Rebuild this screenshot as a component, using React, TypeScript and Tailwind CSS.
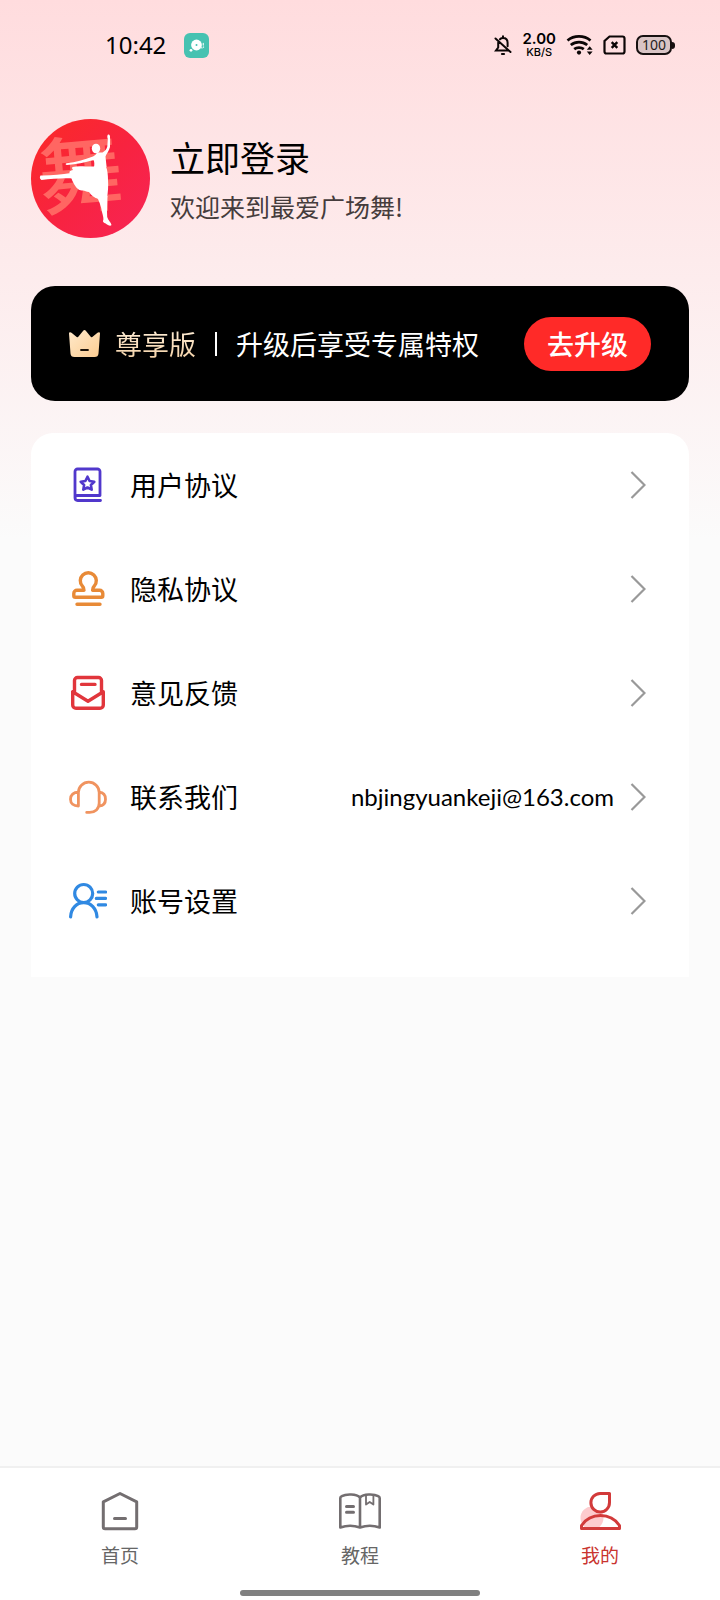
import type { ReactNode } from "react";

const FONT = "font-['Noto_Sans_CJK_SC','Noto_Sans',sans-serif]";

function StatusBar() {
  return (
    <div className="flex h-[90px] items-center justify-between pl-[105px] pr-[45px] text-black">
      <div className="flex items-center gap-[18px]">
        <span className="font-['Noto_Sans',sans-serif] text-2xl">10:42</span>
        <svg viewBox="0 0 25 25" className="size-[25px]" aria-hidden="true">
          <rect width="25" height="25" rx="6" fill="#46c2b1" />
          <circle cx="12.5" cy="12" r="5.4" fill="#fff" />
          <circle cx="12.5" cy="12" r="1" fill="#46c2b1" />
          <circle cx="7" cy="17.3" r="1.4" fill="#fff" />
          <path d="M19.300 10.500v1.500M19.500 13.800v.5M17 14.500l1 .5" stroke="#dff5f1" strokeWidth="1.3" strokeLinecap="round" />
        </svg>
      </div>

      <div className="flex items-center gap-[10px]">
        {/* Muted bell */}
        <svg viewBox="0 0 18 22" className="h-[22px] w-[18px]" fill="none" stroke="#0c0606" strokeWidth="2" strokeLinecap="round" aria-hidden="true">
          <path d="M6 5.200C6.800 4.400 7.800 4 9 4c2.800 0 4.600 2 4.600 4.800v3.400M4.200 8.500v5L2 16.400h12.500M9 2.300v1.200M1.500 4.500l15 13.500" />
          <path d="M8 20h2" strokeWidth="2.200" />
        </svg>
        <div className="flex flex-col items-center font-['Inter',sans-serif]">
          <span className="text-[15px] font-semibold leading-[15px]">2.00</span>
          <span className="text-[11px] font-medium leading-[13px]">KB/S</span>
        </div>
        {/* Wifi */}
        <svg viewBox="0 0 27 22" className="h-[22px] w-[27px]" fill="none" stroke="#0c0606" strokeWidth="2.800" aria-hidden="true">
          <path d="M1.500 6.500c6.500-5.400 16.500-5.400 23 0M4.800 11c4.800-3.900 11.600-3.900 16.400 0M8.200 15.200c2.700-2.200 6.900-2.200 9.600 0" />
          <circle cx="13" cy="18.600" r="2.100" fill="#0c0606" stroke="none" />
          <path d="M20.800 15.800l2.900-3.600 2.900 3.600zM20.800 17.400l2.900 3.600 2.900-3.600z" fill="#0c0606" stroke="none" />
        </svg>
        {/* Missing SIM */}
        <svg viewBox="0 0 23 20" className="h-5 w-[23px]" fill="none" stroke="#0c0606" strokeWidth="2.200" aria-hidden="true">
          <path d="M6.500 1.500h13a2 2 0 0 1 2 2v13a2 2 0 0 1-2 2h-16a2 2 0 0 1-2-2V6z" />
          <path d="M8.700 7.200l5.600 5.600M14.300 7.200l-5.600 5.600" strokeWidth="2.400" />
        </svg>
        <div className="flex items-center">
          <span className="flex h-5 w-9 items-center justify-center rounded-[7px] border-2 border-[#171010] bg-[#d9c4c5] font-['Noto_Sans',sans-serif] text-sm leading-none text-[#241c1c]">
            100
          </span>
          <span className="h-[7px] w-[3px] rounded-r-sm bg-[#171010]" />
        </div>
      </div>
    </div>
  );
}

function Avatar() {
  return (
    <svg viewBox="0 0 120 120" className="size-[120px] shrink-0" role="img" aria-label="最爱广场舞">
      <defs>
        <linearGradient id="avatarBg" x1="0" y1="0" x2="1" y2="1">
          <stop offset="0" stopColor="#fb2a26" />
          <stop offset="0.5" stopColor="#f8233f" />
          <stop offset="1" stopColor="#f72456" />
        </linearGradient>
      </defs>
      <circle cx="59.500" cy="59.500" r="59.500" fill="url(#avatarBg)" />
      <text
        x="8"
        y="87"
        fontSize="84"
        fontWeight="500"
        fill="#ff6662"
        fontFamily="'Noto Sans CJK SC', sans-serif"
        transform="rotate(-5 50 60)"
        aria-hidden="true"
      >
        舞
      </text>
      <g fill="#fff">
        <ellipse cx="65" cy="29.500" rx="4.200" ry="4.800" />
        {/* Raised arm, torso and the other arm */}
        <path d="M77 15.500C78.500 15 79.300 16.500 79 18.500L79 28C78 32 75.500 34.500 74.500 37.500L75.500 48H63C63.500 45.500 63.500 43 62.500 41C54 43.500 45 45.500 36 46C34.500 46 34 44.500 35.500 44.200C45 43.500 53 40.500 62 37.500C64.500 36 65 35.500 66 33.500L71.500 33.500C74 32 75.800 30 76.300 27.500L76.800 20C76 18 76.300 16 77 15.500Z" />
        {/* Skirt */}
        <path d="M63 47.500C57 48 48 46.500 41.500 48C40.500 49.500 41.500 50 42 51C39 51.500 38 52.500 38.500 54C40 57 40.500 61 42.500 64C44.500 68 47.500 71.500 51 71.500C53.500 71 55 73 58 73C60 76 63 79 68 80L76 79C77 73 77.500 67 77 61C77 56 76.500 51 75 47.500Z" />
        {/* Extended and standing legs */}
        <path d="M40 54C30 55.500 20 56.700 9.500 56.500C8.500 58 8.500 60 10.500 61C21 60 31 58.800 42 59.500Z" />
        <path d="M65 77C68 81 70 87 71 93C72 97 73 100 72 102C72 104 74.500 104 76 105.500C77.500 106.800 80 107 80.500 106C80 103.500 77 101 76.200 98C75.700 91 76.500 84 76.500 77Z" />
      </g>
    </svg>
  );
}

function Crown() {
  return (
    <svg viewBox="0 0 31 27" className="h-[27px] w-[31px] shrink-0" aria-hidden="true">
      <defs>
        <linearGradient id="crownFill" x1="0" y1="0" x2="1" y2="1">
          <stop offset="0" stopColor="#ffe9cb" />
          <stop offset="1" stopColor="#fccd92" />
        </linearGradient>
      </defs>
      <path
        d="M0 3.600C0 2 1.500 1.700 2.500 2.800l5.200 4.200c.8.600 1.300.3 1.800-.4L14 1c.9-1.300 2.100-1.300 3 0l4.500 5.600c.5.700 1 1 1.800.4l5.200-4.200C29.500 1.700 31 2 31 3.600l-1.500 19.900C29.300 26 28 27 25.500 27h-20c-2.500 0-3.800-1-4-3.500z"
        fill="url(#crownFill)"
      />
      <path d="M12 20h7" stroke="#1c1208" strokeWidth="1.800" strokeLinecap="round" />
    </svg>
  );
}

type MenuItem = { label: string; color: string; icon: ReactNode; value?: string };

const menu: MenuItem[] = [
  {
    label: "用户协议",
    color: "#5138cc",
    icon: (
      <>
        <path d="M31.500 34.500H8.700A2.700 2.700 0 0 1 6 31.800V5.500A2.500 2.500 0 0 1 8.500 3h20A2.500 2.500 0 0 1 31 5.500v24H8.500c-1.500 0-2.500.8-2.500 2" strokeWidth="2.800" />
        <path d="M18.500 10.700l2.100 4.300 4.700.7-3.400 3.300.8 4.700-4.200-2.200-4.200 2.200.8-4.700-3.400-3.300 4.700-.7z" strokeWidth="2.600" />
      </>
    ),
  },
  {
    label: "隐私协议",
    color: "#e88a37",
    icon: (
      <path
        d="M15 20.200c.3-2-.5-3-1.700-4.200A8 8 0 1 1 25.300 16c-1.200 1.200-2 2.200-1.700 4.200h7a3.200 3.200 0 0 1 3.200 3.200v2.400a1.500 1.500 0 0 1-1.500 1.500h-26a1.500 1.500 0 0 1-1.500-1.500v-2.400A3.200 3.200 0 0 1 8 20.200zM8 34.300h23"
        strokeWidth="3.400"
      />
    ),
  },
  {
    label: "意见反馈",
    color: "#e1363c",
    icon: (
      <path
        d="M5.500 18V6.500A3 3 0 0 1 8.500 3.500h21a3 3 0 0 1 3 3v11.500M3.700 17.700V31a3.300 3.300 0 0 0 3.300 3.300h24a3.300 3.300 0 0 0 3.300-3.300V17.700L19 27.200zM12.500 10.400h13.500"
        strokeWidth="3.400"
      />
    ),
  },
  {
    label: "联系我们",
    color: "#f0935f",
    value: "nbjingyuankeji@163.com",
    icon: (
      <path
        d="M9.400 28V14.500a10.400 10.400 0 0 1 20.800 0V25c0 6-4.200 9.400-9.500 9.400h-3M9.400 14.200C4.500 14.200 1.500 17 1.500 21.200S4.500 28 9.400 28M30.200 14.200c3.700.4 6.300 3 6.300 7s-2.600 6.500-6.300 6.800"
        strokeWidth="2.800"
      />
    ),
  },
  {
    label: "账号设置",
    color: "#3089e2",
    icon: (
      <>
        <circle cx="14.700" cy="11.500" r="9" strokeWidth="3.200" />
        <path d="M1.600 34.800C2 26.500 7.500 20.700 14.700 20.700S27.500 26.500 28 34.800M29.300 10h7.300M27.300 16.400h9.300M29.300 22.800h7.300" strokeWidth="3.200" />
      </>
    ),
  },
];

function MenuRow({ label, color, icon, value }: MenuItem) {
  return (
    <li>
      <a href="#" className="flex h-[104px] items-center pl-[38px] pr-[43px]">
        <svg viewBox="0 0 38 38" className="size-[38px] shrink-0" fill="none" stroke={color} strokeLinecap="round" strokeLinejoin="round" aria-hidden="true">
          {icon}
        </svg>
        <span className="ml-[23px] flex-1 text-[27px] leading-10">{label}</span>
        {value && <span className="mr-4 font-['Lato',sans-serif] text-2xl">{value}</span>}
        <svg viewBox="0 0 16 28" className="h-7 w-4 shrink-0" fill="none" stroke="#999" strokeWidth="2.200" aria-hidden="true">
          <path d="M1.500 1L14.500 14 1.500 27" />
        </svg>
      </a>
    </li>
  );
}

const tabs = [
  {
    label: "首页",
    active: false,
    icon: (
      <g stroke="#736e70" strokeWidth="3">
        <path d="M22 2.500L38.700 10.800V36a1.800 1.800 0 0 1-1.800 1.800H7.100A1.800 1.800 0 0 1 5.300 36V10.800z" />
        <path d="M16.500 27.500h11" />
      </g>
    ),
  },
  {
    label: "教程",
    active: false,
    icon: (
      <g stroke="#736e70" strokeWidth="2.600">
        <path d="M22 6.500C18.500 2.800 8 2.800 3.800 5.200A2 2 0 0 0 2.300 7v29.500c5.700-2 14-2 19.700 0 5.700-2 14-2 19.700 0V7a2 2 0 0 0-1.500-1.800C36 2.800 25.500 2.800 22 6.500zM22 6.500v30" />
        <path d="M8.500 15.500h7M8.500 21.200h7" strokeWidth="3" />
        <path d="M28 4.500v9l3.700-2.500 3.700 2.500v-9" strokeWidth="1.800" />
      </g>
    ),
  },
  {
    label: "我的",
    active: true,
    icon: (
      <g stroke="#d23a3a" strokeWidth="3">
        <circle cx="14" cy="27" r="11.500" fill="#fdcbce" stroke="none" />
        <path d="M22 2.400h9.500v9.200A9.300 9.300 0 1 1 22 2.400z" fill="#fff" />
        <path d="M3.500 37.600V34.500C8 28 15 24.600 22.500 24.600S37 28 41.500 34.500v3.100z" />
      </g>
    ),
  },
];

function TabBar() {
  return (
    <nav className="border-t-2 border-[#f0f0f0] bg-white pb-1">
      <div className="flex pt-[23px]">
        {tabs.map(({ label, active, icon }) => (
          <a key={label} href="#" aria-current={active ? "page" : undefined} className="flex flex-1 flex-col items-center gap-2">
            <svg viewBox="0 0 44 40" className="h-10 w-11" fill="none" strokeLinecap="round" strokeLinejoin="round" aria-hidden="true">
              {icon}
            </svg>
            <span className={active ? "text-[19px] leading-8 text-[#c9342f]" : "text-[19px] leading-8 text-[#666]"}>{label}</span>
          </a>
        ))}
      </div>
      {/* Gesture bar */}
      <div className="mx-auto mt-[19px] h-[6px] w-1/3 rounded-full bg-[#808080]" />
    </nav>
  );
}

export default function App() {
  return (
    <div className={`${FONT} flex min-h-screen flex-col bg-[#fbfbfb] bg-[linear-gradient(to_bottom,#ffdcde_0px,#fbfbfb_540px)] text-black`}>
      <StatusBar />

      <main className="flex-1 px-[31px] pt-[29px]">
        <a href="#" className="flex items-center gap-[19px]">
          <Avatar />
          <div className="flex flex-col gap-2">
            <h1 className="text-[35px] leading-[46px]">立即登录</h1>
            <p className="text-[25px] leading-9 text-[#453c3c]">欢迎来到最爱广场舞!</p>
          </div>
        </a>

        {/* Premium banner */}
        <section className="mt-[47px] flex h-[115px] items-center rounded-[24px] bg-black px-[38px] text-[27px] leading-10">
          <Crown />
          <span className="ml-[15px] bg-linear-to-b from-[#fff0dc] to-[#f3cfa2] bg-clip-text text-transparent">尊享版</span>
          <span className="mx-[19px] h-6 w-[2px] bg-white" />
          <span className="text-white">升级后享受专属特权</span>
          <button type="button" className="ml-auto h-[54px] rounded-full bg-[#ff2a28] px-[23px] font-medium text-white">
            去升级
          </button>
        </section>

        <ul className="mt-8 rounded-t-[22px] bg-white pb-6">
          {menu.map((item) => (
            <MenuRow key={item.label} {...item} />
          ))}
        </ul>
      </main>

      <TabBar />
    </div>
  );
}
